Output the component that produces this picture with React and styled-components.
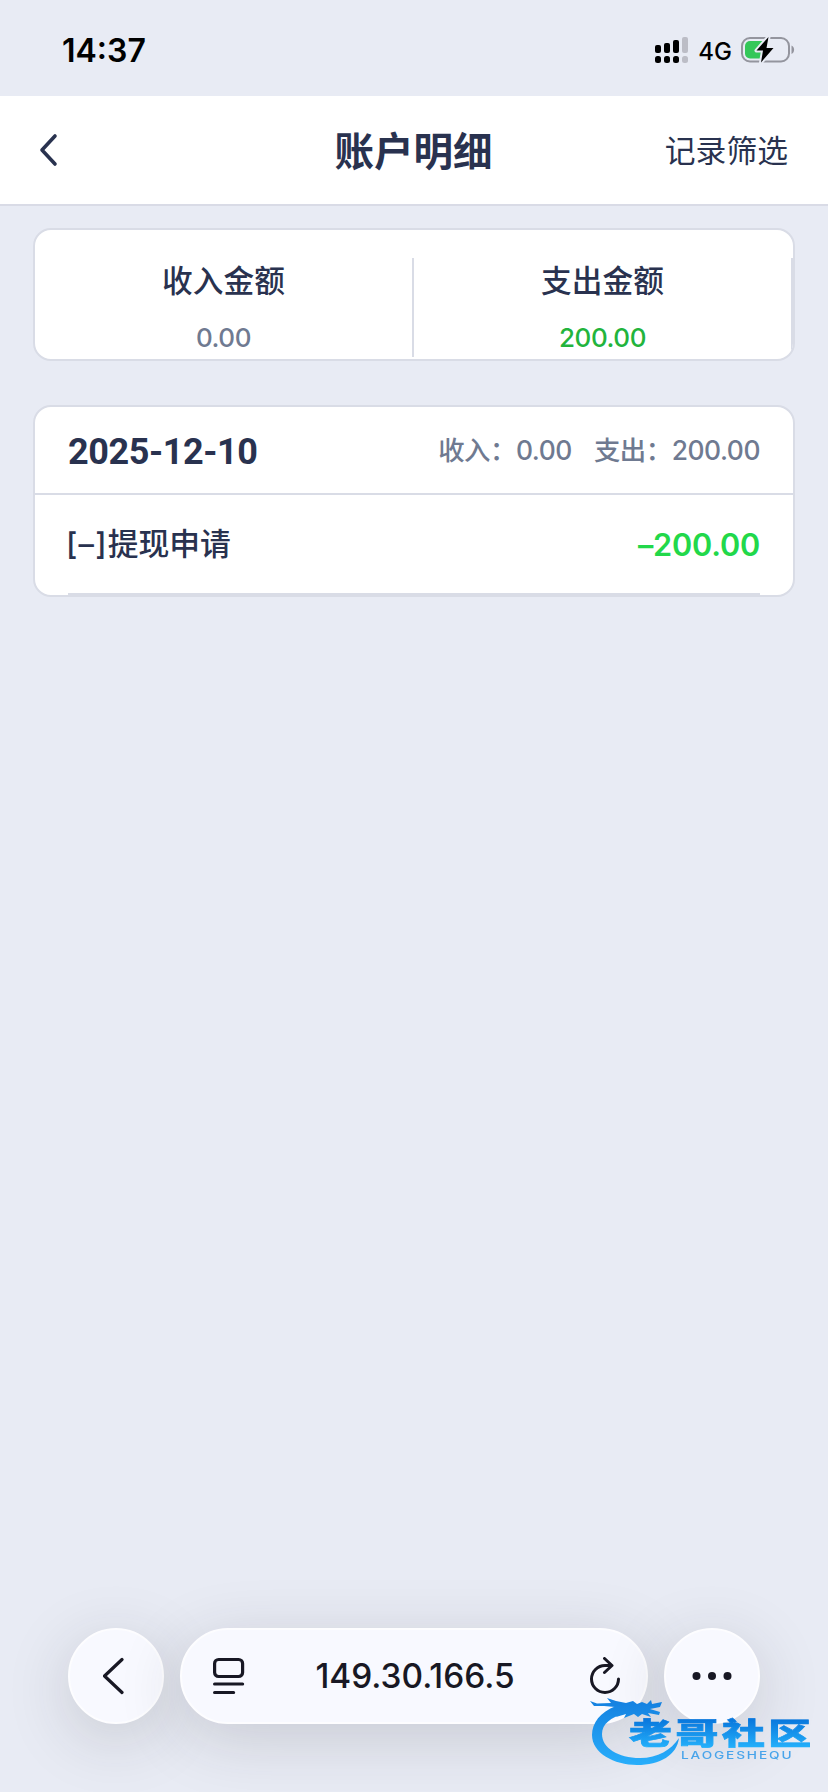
import React from 'react'
import styled, { createGlobalStyle } from 'styled-components';

const GlobalStyle = createGlobalStyle`
  * {
    box-sizing: border-box;
  }

  body {
    margin: 0;
    background-color: #e8ebf4;
    color: #29324f;
    font-family: Inter, "Noto Sans CJK SC", sans-serif;
  }
`;

const Page = styled.div`
  display: flex;
  flex-direction: column;
  width: 828px;
  height: 1792px;
  overflow: hidden;
  background-color: #e8ebf4;
`;

const StatusBar = styled.div`
  display: flex;
  align-items: center;
  height: 96px;
  padding: 4px 33px 0 62px;
  color: #000;
`;

const Time = styled.span`
  flex: 1;
  font-size: 32px;
  font-weight: 600;
`;

const Network = styled.span`
  margin: 2px 9px 0 9px;
  font-size: 24px;
  font-weight: 500;
`;

const Header = styled.header`
  display: grid;
  grid-template-columns: 1fr auto 1fr;
  align-items: center;
  height: 110px;
  padding: 0 40px 0 39px;
  background-color: #fff;
  border-bottom: 2px solid #d9dbe6;
`;

const Title = styled.h1`
  margin: 0;
  padding-bottom: 4px;
  font-size: 39.5px;
  font-weight: 700;
`;

const Filter = styled.span`
  justify-self: end;
  padding-bottom: 4px;
  font-size: 30.8px;
`;

const Card = styled.section`
  margin: 0 33px;
  background-color: #fff;
  border: 2px solid #d9dce6;
  border-radius: 18px;
  overflow: hidden;
`;

const Summary = styled(Card)`
  display: flex;
  height: 133px;
  margin-top: 22px;
  padding-top: 28px;
`;

const SummaryItem = styled.div`
  display: flex;
  flex: 1;
  flex-direction: column;
  align-items: center;
  height: 99px;
  border-right: 2px solid #d9dce6;
`;

const Label = styled.span`
  font-size: 30.7px;
  font-weight: 500;
  line-height: 46px;
`;

const Amount = styled.span`
  margin-top: 19px;
  font-size: 26px;
  font-weight: 500;
  letter-spacing: -0.4px;
  line-height: 30px;
  color: ${(props) => props.$color};
`;

const Day = styled(Card)`
  height: 192px;
  margin-top: 44px;
`;

const DayHeader = styled.div`
  display: flex;
  align-items: center;
  justify-content: space-between;
  height: 88px;
  padding: 0 33px;
  border-bottom: 2px solid #d9dce6;
`;

const DateText = styled.span`
  padding-top: 4px;
  font-family: Roboto, sans-serif;
  font-size: 36px;
  font-weight: 700;
  letter-spacing: -0.4px;
`;

const Totals = styled.span`
  display: flex;
  gap: 22px;
  padding-bottom: 4px;
  color: #6f7a91;
  font-size: 26.4px;
  font-weight: 500;
  letter-spacing: -0.45px;
`;

const Row = styled.div`
  display: flex;
  align-items: center;
  justify-content: space-between;
  height: 100px;
  margin: 0 33px;
  border-bottom: 2px solid #d9dce6;
  font-feature-settings: "calt" 0;
`;

const RowTitle = styled.span`
  padding-bottom: 5px;
  font-size: 30.8px;
  font-weight: 500;
`;

const Sign = styled.span`
  margin-left: -2px;
  letter-spacing: 1.2px;
`;

const RowAmount = styled.span`
  color: #22d84a;
  font-size: 30.7px;
  font-weight: 600;
  letter-spacing: -0.2px;
`;

const Toolbar = styled.nav`
  display: flex;
  gap: 16px;
  margin: auto 68px 68px;
`;

const Floating = styled.div`
  display: flex;
  align-items: center;
  height: 96px;
  background-color: #f8f9ff;
  border: 2px solid #fdfdff;
  border-radius: 48px;
  color: #181824;
  box-shadow: 0 14px 64px rgba(40, 40, 45, 0.17);
`;

const RoundButton = styled(Floating)`
  justify-content: center;
  width: 96px;
`;

const AddressBar = styled(Floating)`
  flex: 1;
  justify-content: space-between;
  padding: 0 25px 0 31px;
`;

const Address = styled.span`
  padding-right: 4px;
  font-size: 33.4px;
  font-weight: 500;
`;

const Watermark = styled.svg`
  position: absolute;
  left: 580px;
  top: 1686px;
  filter: blur(0.5px);
`;

function Signal() {
  return (
    <svg width="34" height="28" viewBox="0 0 34 28">
      <g fill="#000">
        <rect x="0" y="9" width="6" height="8" rx="2" />
        <rect x="9" y="7" width="6" height="10" rx="2" />
        <rect x="18" y="4" width="6" height="13" rx="2" />
        <rect x="0" y="20" width="6" height="7" rx="2.5" />
        <rect x="9" y="20" width="6" height="7" rx="2.5" />
        <rect x="18" y="20" width="6" height="7" rx="2.5" />
      </g>
      <g fill="#bcbdc6">
        <rect x="27" y="1" width="6" height="16" rx="2" />
        <rect x="27" y="20" width="6" height="7" rx="2.5" />
      </g>
    </svg>
  )
}

function Battery() {
  return (
    <svg width="54" height="28" viewBox="0 0 54 28">
      <rect x="1" y="2" width="47" height="23.5" rx="8" fill="none" stroke="#94959e" strokeWidth="2" />
      <path d="M50.5 9.5c3.500 1.500 3.500 7 0 8.500z" fill="#94959e" />
      <path d="M9 5h12v17.500H9a5 5 0 0 1-5-5V10a5 5 0 0 1 5-5z" fill="#34c759" />
      <path
        d="M27.500 1L15.500 14.500h6.500L20 26.500 32.500 12H25.500z"
        fill="#000"
        stroke="#e8ebf4"
        strokeWidth="4"
        strokeLinejoin="round"
        paintOrder="stroke"
      />
    </svg>
  )
}

function Brand() {
  return (
    <Watermark width="240" height="84" viewBox="0 0 240 84">
      <defs>
        <linearGradient id="ring" gradientUnits="userSpaceOnUse" x1="0" y1="14" x2="0" y2="79">
          <stop offset="0" stopColor="#1480e0" />
          <stop offset="1" stopColor="#28aefb" />
        </linearGradient>
        <linearGradient id="word" x1="0" y1="0" x2="0" y2="1">
          <stop offset="0.25" stopColor="#0a78dd" />
          <stop offset="0.9" stopColor="#25b2fc" />
        </linearGradient>
      </defs>
      <g fill="url(#ring)">
        <path d="M36 20C20 26 12 37 12 49c0 18 22 30 45 30s40-10 42-27c-8 12-21 20-39 20-22 0-38-10-38-24 0-10 9-17 22-20l2-6z" />
        <path d="M10 15L17 17.500 31 17 27 12 36 15 46 17 53 15 57 18 62 16 67 18 71 14 72 18 82 16 80 21 70 23 80 26 79 29 68 27 71 31 62 28 58 31 54 28 44 32 46 28 36 31 40 26 32 26 35 21 24 20 14 20z" />
      </g>
      <text
        transform="translate(49 58) scale(1.43 1)"
        fill="url(#word)"
        fontFamily="Noto Sans CJK SC, sans-serif"
        fontWeight="900"
        fontSize="30"
        letterSpacing="2.500"
        stroke="url(#word)"
        strokeWidth="0.7"
      >
        老哥社区
      </text>
      <text
        transform="translate(101 72.500) scale(1.3 1)"
        fill="#48a4ea"
        fontFamily="Inter, sans-serif"
        fontWeight="500"
        fontSize="10.500"
        textLength="85"
      >
        LAOGESHEQU
      </text>
    </Watermark>
  )
}

function App() {
  return (
    <Page>
      <GlobalStyle />
      <StatusBar>
        <Time>14:37</Time>
        <Signal />
        <Network>4G</Network>
        <Battery />
      </StatusBar>

      <Header>
        <svg width="20" height="34" viewBox="0 0 20 34" fill="none" stroke="#29324f" strokeWidth="3.600" strokeLinecap="round" strokeLinejoin="round">
          <path d="M16 3L3 17l13 14" />
        </svg>
        <Title>账户明细</Title>
        <Filter>记录筛选</Filter>
      </Header>

      <Summary>
        <SummaryItem>
          <Label>收入金额</Label>
          <Amount $color="#6f7a91">0.00</Amount>
        </SummaryItem>
        <SummaryItem>
          <Label>支出金额</Label>
          <Amount $color="#22b43c">200.00</Amount>
        </SummaryItem>
      </Summary>

      <Day>
        <DayHeader>
          <DateText>2025-12-10</DateText>
          <Totals>
            <span>收入：0.00</span>
            <span>支出：200.00</span>
          </Totals>
        </DayHeader>
        <Row>
          <RowTitle><Sign>[–]</Sign>提现申请</RowTitle>
          <RowAmount>–200.00</RowAmount>
        </Row>
      </Day>

      <Toolbar>
        <RoundButton>
          <svg width="26" height="38" viewBox="0 0 26 38" fill="none" stroke="currentColor" strokeWidth="3.200" strokeLinecap="round" strokeLinejoin="round">
            <path d="M19 2.500L1.500 19 19 35.500" />
          </svg>
        </RoundButton>
        <AddressBar>
          <svg width="32" height="38" viewBox="0 0 32 38" fill="none" stroke="currentColor" strokeWidth="3.200" strokeLinecap="round">
            <rect x="1.600" y="2.500" width="28" height="17" rx="4" />
            <path d="M1.600 27h28M1.600 35.500h19" />
          </svg>
          <Address>149.30.166.5</Address>
          <svg width="32" height="38" viewBox="0 0 32 38" fill="none" stroke="currentColor" strokeWidth="3" strokeLinecap="round" strokeLinejoin="round">
            <path d="M22.500 8.500H16a13.500 13.500 0 1 0 13.500 13.500M15.500 1.500l7.500 7-7.500 7" />
          </svg>
        </AddressBar>
        <RoundButton>
          <svg width="40" height="10" viewBox="0 0 40 10" fill="currentColor">
            <circle cx="4.500" cy="5" r="4" />
            <circle cx="20" cy="5" r="4" />
            <circle cx="35.500" cy="5" r="4" />
          </svg>
        </RoundButton>
      </Toolbar>
      <Brand />
    </Page>
  )
}

export default App;
